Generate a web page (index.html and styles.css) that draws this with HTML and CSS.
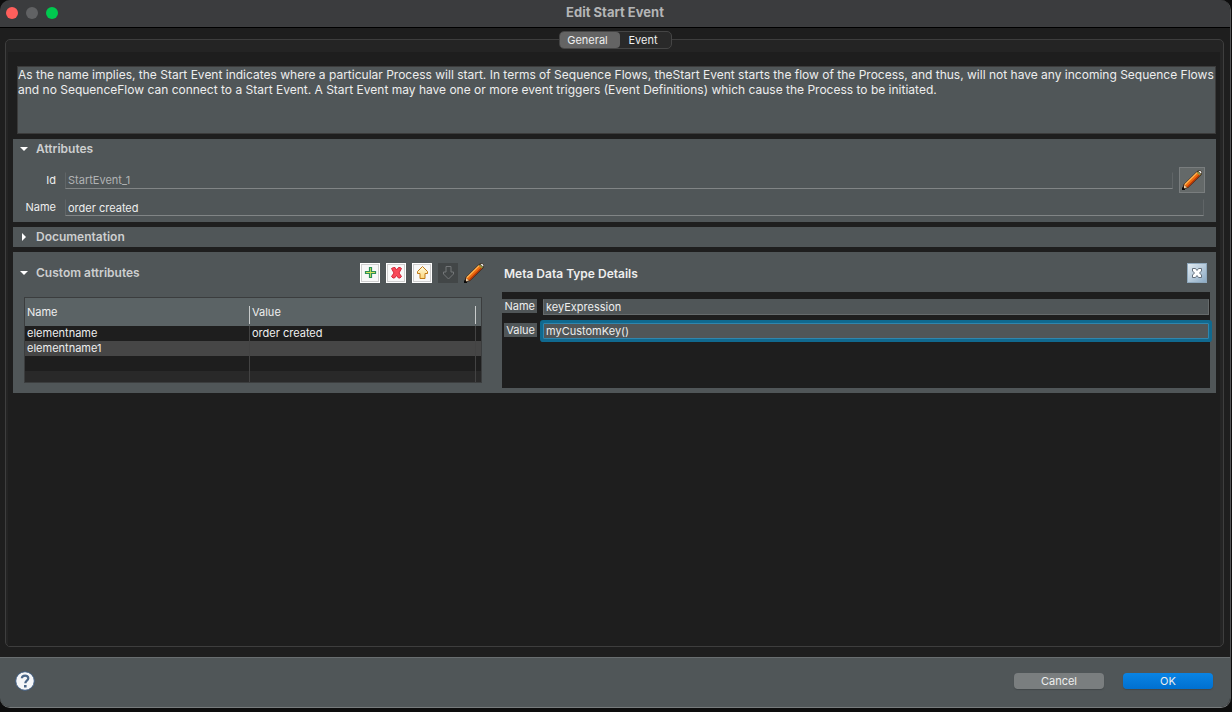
FILE: index.html
```html
<!DOCTYPE html>
<html lang="en">
<head>
<meta charset="utf-8">
<title>Edit Start Event</title>
<link rel="stylesheet" href="styles.css">
</head>
<body>
<svg class="defs" width="0" height="0" aria-hidden="true">
  <defs>
    <linearGradient id="gold" x1="0" y1="0" x2="0" y2="1"><stop offset="0" stop-color="#fffbe0"/><stop offset="1" stop-color="#fbd679"/></linearGradient>
    <symbol id="pencil" viewBox="0 0 20 20">
      <path d="M0 19.500 1.500 14.500 15.500 .8 18.500 .3 20 2 19.500 4.800 6 18Z" fill="#3a2414"/>
      <path d="M2 15 15 2 18.200 5 5.500 17.600Z" fill="#ee6a0e"/>
      <path d="M2.800 14.800 15.200 2.600" stroke="#ffb956" stroke-width="1.300"/>
      <path d="M5.500 17 17.800 4.800" stroke="#b23406" stroke-width="1.200"/>
      <path d="M14.600 2.600 16 1.400 19 4.200 17.700 5.500Z" fill="#8f9444"/>
      <path d="M16.500 1.300 18.300 .8 19.500 2.200 19 3.800Z" fill="#f0f0f0"/>
      <path d="M2 15 5 17.600 2 18.300Z" fill="#f4d3a8"/>
      <path d="M0 17.500h2v1.500h1v1H0Z" fill="#0b0b0b"/>
    </symbol>
  </defs>
</svg>
<div class="window">
  <header class="titlebar">
    <span class="lights"><button class="light close" aria-label="Close"></button><button class="light minimize" aria-label="Minimize" disabled></button><button class="light zoom" aria-label="Zoom"></button></span>
    <h1 class="title">Edit Start Event</h1>
  </header>
  <main class="content">
    <div class="frame">
      <nav class="tabs" role="tablist">
        <button class="tab selected" role="tab" aria-selected="true">General</button>
        <button class="tab" role="tab" aria-selected="false">Event</button>
      </nav>
      <div class="page">
        <textarea class="description" aria-label="Description" readonly>As the name implies, the Start Event indicates where a particular Process will start. In terms of Sequence Flows, theStart Event starts the flow of the Process, and thus, will not have any incoming Sequence Flows and no SequenceFlow can connect to a Start Event. A Start Event may have one or more event triggers (Event Definitions) which cause the Process to be initiated.</textarea>

        <section class="section attributes">
          <h2 class="heading"><button class="toggle" aria-expanded="true"><svg class="arrow" viewBox="0 0 8 8"><path d="M0 2h8L4 6Z"/></svg>Attributes</button></h2>
          <div class="row id-row">
            <label class="label" for="id">Id</label>
            <input class="field muted" id="id" value="StartEvent_1" readonly>
            <button class="edit" aria-label="Edit id"><svg class="icon"><use href="#pencil"/></svg></button>
          </div>
          <div class="row">
            <label class="label" for="name">Name</label>
            <input class="field" id="name" value="order created">
          </div>
        </section>

        <section class="section">
          <h2 class="heading"><button class="toggle" aria-expanded="false"><svg class="arrow" viewBox="0 0 8 8"><path d="M2 0v8l4-4Z"/></svg>Documentation</button></h2>
        </section>

        <section class="section custom">
          <div class="list-pane">
            <div class="pane-head">
              <h2 class="heading"><button class="toggle" aria-expanded="true"><svg class="arrow" viewBox="0 0 8 8"><path d="M0 2h8L4 6Z"/></svg>Custom attributes</button></h2>
              <div class="tools">
                <button class="tool" aria-label="Add"><svg class="icon" viewBox="0 0 20 20"><path d="M9.500 4.500h2v4h4v2h-4v4h-2v-4h-4v-2h4Z" fill="#d3e25c" stroke="#2c8f58" stroke-width="1.200"/></svg></button>
                <button class="tool" aria-label="Remove"><svg class="icon" viewBox="0 0 20 20"><path d="M5.500 5.500 7.500 4.500h1.500l1.500 2.500 2-2.500H14l1.500 1-2.500 4.500 2.500 3.500-1.500 1.500h-1.500l-2-2.500-2 2.500H7l-1.500-1.500L8 10Z" fill="#f84a58" stroke="#d5263a"/></svg></button>
                <button class="tool" aria-label="Move up"><svg class="icon" viewBox="0 0 20 20"><path d="M10.500 3.500 15.500 8.500v2h-2.500v5H8v-5H5.500v-2Z" fill="url(#gold)" stroke="#c17b17"/></svg></button>
                <button class="tool off" aria-label="Move down" disabled><svg class="icon" viewBox="0 0 20 20"><path d="M8 3.500h5v5.500h2.500v2l-5 5-5-5V9H8Z" fill="none" stroke="#737678"/></svg></button>
                <button class="tool plain" aria-label="Edit"><svg class="icon"><use href="#pencil"/></svg></button>
              </div>
            </div>
            <table class="table">
              <colgroup><col class="col-name"><col><col class="col-end"></colgroup>
              <thead><tr><th>Name</th><th>Value</th><th></th></tr></thead>
              <tbody>
                <tr><td>elementname</td><td>order created</td><td></td></tr>
                <tr><td>elementname1</td><td></td><td></td></tr>
                <tr><td></td><td></td><td></td></tr>
                <tr class="last"><td></td><td></td><td></td></tr>
              </tbody>
            </table>
          </div>
          <div class="detail-pane">
            <div class="pane-head">
              <h2 class="detail-title">Meta Data Type Details</h2>
              <button class="dismiss" aria-label="Close details"><svg class="icon" viewBox="0 0 20 20"><path d="M5.500 5.500h3L10 7.500l1.500-2h3v2.500l-2 2 2 2v2.500h-3L10 12.500l-1.500 2h-3V12l2-2-2-2Z" fill="#fff" stroke="#65717d"/></svg></button>
            </div>
            <div class="details">
              <label class="tag" for="key">Name</label>
              <input class="box" id="key" value="keyExpression">
              <label class="tag" for="value">Value</label>
              <input class="box focused" id="value" value="myCustomKey()">
            </div>
          </div>
        </section>
      </div>
    </div>
  </main>
  <footer class="footer">
    <button class="help" aria-label="Help"><svg class="help-icon" viewBox="0 0 20 20"><circle cx="10" cy="10" r="9.300" fill="#f5f6f8" stroke="#3e5c82"/><path d="M6.800 7.300C7 3.600 13.300 3.700 13.300 7.200c0 2.500-3 2.500-3 5" fill="none" stroke="#4a6688" stroke-width="2.200"/><path d="M9 14h2.600v2.500H9Z" fill="#4a6688"/></svg></button>
    <button class="action">Cancel</button>
    <button class="action primary">OK</button>
  </footer>
</div>
</body>
</html>
```
FILE: styles.css
```css
* { box-sizing: border-box; }
body {
  margin: 0;
  background: #0d0d0d;
  color: #eeeeee;
  font: 11px/15px Inter, "Liberation Sans", sans-serif;
}
button, input, textarea { font: inherit; color: inherit; margin: 0; padding: 0; border: 0; border-radius: 0; background: none; outline: 0; }
h1, h2 { margin: 0; font-size: 12px; }
.defs { position: absolute; }
.icon { display: block; width: 20px; height: 20px; }

.window {
  display: flex;
  flex-direction: column;
  height: calc(100vh - 4px);
  margin-right: 1px;
  overflow: hidden;
  background: #1e1e1e;
  border-right: 1px solid #555758;
  border-bottom: 1px solid #777b7c;
  border-radius: 10px;
}
.titlebar {
  display: grid;
  grid-template-columns: 1fr auto 1fr;
  align-items: center;
  height: 28px;
  padding: 0 6px 2px;
  background: #3b3c3e;
  border-bottom: 1px solid #000;
}
.lights { display: flex; gap: 8px; }
.light { width: 12px; height: 12px; border-radius: 50%; }
.close { background: #ff5f5c; }
.minimize { background: #616264; }
.zoom { background: #00c94f; }
.title { font-size: 13px; font-weight: 700; color: #b4b5b6; }

.content { flex: 1; display: flex; padding: 11px 6px 10px 5px; }
.frame {
  position: relative;
  flex: 1;
  min-width: 0;
  padding: 12px 3px 0 2px;
  border: 1px solid #3e3e3e;
  border-radius: 5px;
  background: #242424;
}
.tabs {
  position: absolute;
  top: -9px;
  left: 50%;
  display: flex;
  width: 113px;
  height: 18px;
  margin-left: -56px;
  border: 1px solid #454545;
  border-radius: 5px;
  background: #292929;
}
.tab { flex: 1; padding-right: 4px; line-height: 16px; border-radius: 4px; }
.selected { flex: 0 0 60px; background: #646464; }
.page {
  display: flex;
  flex-direction: column;
  gap: 5px;
  height: 100%;
  padding: 14px 4px 0 5px;
  background: #1e1e1e;
}
.description {
  display: block;
  height: 68px;
  margin-left: 4px;
  border: 1px solid #3b3b3b;
  background: #505658;
  font-size: 12px;
  resize: none;
  overflow: hidden;
}

.section { background: #505658; }
.heading { line-height: 20px; }
.toggle { display: flex; align-items: center; gap: 8px; padding-left: 7px; font-weight: 600; color: #cdcecf; line-height: 20px; }
.arrow { width: 8px; height: 8px; fill: #fff; }
.attributes { padding-bottom: 6px; }
.row { display: flex; align-items: center; margin-right: 12px; }
.id-row { margin: 8px 11px 6px 0; height: 26px; }
.label { width: 52px; padding-right: 9px; text-align: right; }
.field {
  flex: 1;
  min-width: 0;
  height: 17px;
  padding: 0 2px;
  border: 1px solid #606567;
  border-top-color: transparent;
  border-bottom-color: #818586;
}
.muted { color: #b0b3b4; }
.edit { width: 26px; height: 26px; margin-left: 6px; padding: 2px; border: 1px solid #797d7e; background: #646969; }

.custom { display: flex; gap: 20px; padding: 11px 6px 5px 11px; }
.list-pane { flex: 0 0 458px; }
.detail-pane { flex: 1; min-width: 0; }
.pane-head { display: flex; align-items: center; justify-content: space-between; height: 20px; }
.list-pane .pane-head { margin: 0 -2px 14px -11px; }
.tools { display: flex; gap: 6px; }
.tool { width: 20px; height: 20px; background: #f8f8f8; box-shadow: inset 0 0 0 1px #fff, inset 0 0 0 2px #cfcfcf; }
.off { background: #424647; box-shadow: none; }
.plain { background: none; box-shadow: none; }

.table { width: 100%; table-layout: fixed; border-collapse: separate; border-spacing: 0; border: 1px solid #3b3d3e; background: #1e1e1e; }
.col-name { width: 225px; }
.col-end { width: 5px; }
.table th, .table td { padding: 0 2px; text-align: left; font-weight: 400; }
.table th { height: 28px; background: #5b6365 linear-gradient(#c8cbcb, #c8cbcb) no-repeat right 8px / 1px 18px; }
.table td { height: 15px; border-right: 1px solid #434343; }
.table tr > :last-child { padding: 0; border-right: 0; background-image: none; }
.table tbody tr:nth-child(2) { background: #464646; }
.table tbody tr.last { background: #292929; }
.table .last td { height: 11px; }

.detail-title { padding-left: 2px; font-weight: 600; }
.dismiss { width: 20px; height: 20px; margin-right: 3px; border: 1px solid #8fa9be; background: linear-gradient(135deg, #e1eaf1, #8cabc5); }
.dismiss .icon { margin: -1px; }
.detail-pane .pane-head { margin-bottom: 9px; }
.details {
  display: grid;
  grid-template-columns: 35px 1fr;
  grid-auto-rows: 16px;
  align-items: start;
  gap: 8px 6px;
  height: 96px;
  padding: 7px 1px 0 0;
  background: #1e1e1e;
}
.tag { justify-self: end; height: 14px; padding: 0 2px; line-height: 14px; background: #505658; }
.box { width: 100%; min-width: 0; height: 16px; padding: 0 2px; border: 1px solid #666b6c; border-top-color: #505658; background: #505658; }
.focused { border-color: #2f86ae; box-shadow: 0 0 0 3px #10698f; border-radius: 1px; }

.footer {
  display: flex;
  align-items: center;
  gap: 19px;
  height: 50px;
  padding: 0 17px 3px 15px;
  background: #505658;
  border-top: 1px solid #696e70;
}
.help { margin-right: auto; }
.help-icon { display: block; width: 20px; height: 20px; }
.action { width: 90px; height: 16px; border-radius: 4px; background: #7a7e7f; line-height: 16px; box-shadow: 0 1px 1px #42484a; }
.primary { background: linear-gradient(#0a84e4, #0070d0); }
```
